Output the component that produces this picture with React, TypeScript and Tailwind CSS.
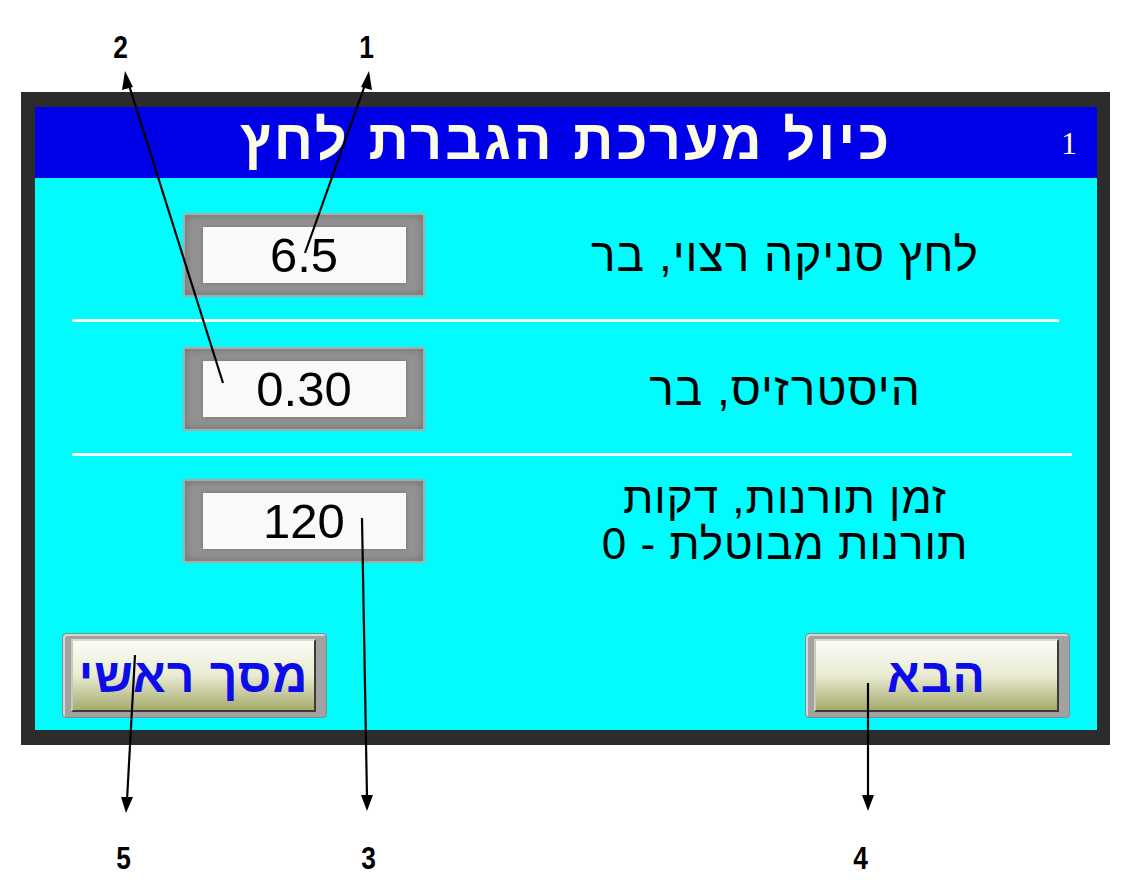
const valueBox = (v: string) => (
  <div className="w-[242px] h-[84px] rounded-[2px] bg-[#939393] border-2 border-[#ababab] shadow-[inset_0_0_10px_#6f6f6f] flex items-center justify-center">
    <div className="w-[203px] h-[56px] bg-[#f8faf8] shadow-[0_0_4px_#707070] flex items-center justify-center text-[49px] leading-none text-black font-['Liberation_Sans',sans-serif]">
      {v}
    </div>
  </div>
);

const bigButton = (label: string) => (
  <div className="w-[265px] h-[85px] rounded-[4px] bg-[#a2a2a2] border border-[#7e8c8c] shadow-[inset_2px_2px_0_#d6d6d6] pl-[8px] pr-[10px] py-[5px]">
    <div
      dir="rtl"
      className="w-full h-full border-2 border-t-[#d8dcc8] border-l-[#c8ccb4] border-r-[#3c3c34] border-b-[#3c3c34] bg-linear-to-b from-[#fbfcf6] via-[#e9ebd2] to-[#a6ab6c] flex items-center justify-center text-[48px] tracking-[1px] font-bold text-[#0c0ce8] font-['Liberation_Sans',sans-serif]"
    >
      {label}
    </div>
  </div>
);

function Arrows() {
  return (
    <svg
      className="absolute left-0 top-0 pointer-events-none"
      width="1129"
      height="882"
      viewBox="0 0 1129 882"
    >
      <g stroke="#000" strokeWidth="2.2" fill="none">
        <line x1="366" y1="82" x2="305" y2="253" />
        <line x1="128" y1="82" x2="223" y2="383" />
        <line x1="362" y1="518" x2="367" y2="798" />
        <line x1="868" y1="683" x2="868" y2="798" />
        <line x1="135" y1="655" x2="127" y2="800" />
      </g>
      <g fill="#000">
        <polygon points="369,71 372,90 361,87" />
        <polygon points="125,71 133,87 122,90" />
        <polygon points="367,811 361,795 373,795" />
        <polygon points="868,811 862,795 874,795" />
        <polygon points="126,813 121,797 133,797" />
      </g>
    </svg>
  );
}

const annotation = "text-[31px] font-bold leading-none text-black font-['Liberation_Sans',sans-serif] scale-x-[0.85]";
const label = "ml-[135px] w-[450px] text-center tracking-[1px] text-black font-['Liberation_Sans',sans-serif]";

export default function App() {
  return (
    <div className="relative w-[1129px] h-[882px] bg-white overflow-hidden">
      <div className="h-[92px] relative">
        <span className={`absolute left-[112px] top-[32px] ${annotation}`}>2</span>
        <span className={`absolute left-[358px] top-[32px] ${annotation}`}>1</span>
      </div>

      <div className="ml-[21px] w-[1089px] h-[653px] bg-[#2c2c2c] pt-[15px] pl-[14px] pr-[13px] pb-[15px]">
        <div className="w-full h-full flex flex-col bg-[#00fcfc]">
          <div className="h-[71px] bg-[#0000e8] grid grid-cols-[1fr_auto_1fr] items-center">
            <div />
            <div
              dir="rtl"
              className="text-[56px] tracking-[3px] font-bold text-[#fbfbe8] leading-none pb-[6px] font-['Liberation_Sans',sans-serif]"
            >
              כיול מערכת הגברת לחץ
            </div>
            <div className="flex justify-end pr-[20px]">
              <span className="text-[32px] text-[#fbfbe8] leading-none font-['Liberation_Serif',serif]">1</span>
            </div>
          </div>

          <div className="flex-1 flex flex-col pt-[35px]">
            <div className="h-[84px] flex items-center pl-[148px]">
              {valueBox("6.5")}
              <div dir="rtl" className={`${label} text-[46px] leading-none`}>
                לחץ סניקה רצוי, בר
              </div>
            </div>

            <div className="mt-[22px] ml-[37px] w-[987px] h-[3px] bg-[#f2ffff]" />

            <div className="mt-[25px] h-[84px] flex items-center pl-[148px]">
              {valueBox("0.30")}
              <div dir="rtl" className={`${label} text-[46px] leading-none`}>
                היסטרזיס, בר
              </div>
            </div>

            <div className="mt-[22px] ml-[37px] w-[1000px] h-[3px] bg-[#f2ffff]" />

            <div className="mt-[23px] h-[84px] flex items-center pl-[148px]">
              {valueBox("120")}
              <div dir="rtl" className={`${label} text-[44px] leading-[46px]`}>
                <div>זמן תורנות, דקות</div>
                <div>תורנות מבוטלת - 0</div>
              </div>
            </div>

            <div className="mt-[70px] px-[27px] flex justify-between">
              {bigButton("מסך ראשי")}
              {bigButton("הבא")}
            </div>
          </div>
        </div>
      </div>

      <div className="relative h-[137px]">
        <span className={`absolute left-[115px] top-[98px] ${annotation}`}>5</span>
        <span className={`absolute left-[360px] top-[98px] ${annotation}`}>3</span>
        <span className={`absolute left-[852px] top-[98px] ${annotation}`}>4</span>
      </div>

      <Arrows />
    </div>
  );
}
